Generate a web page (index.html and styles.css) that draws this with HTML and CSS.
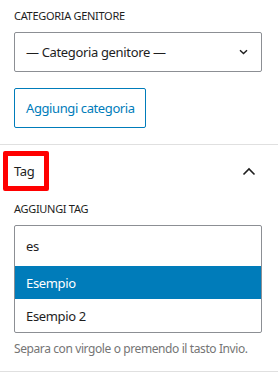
FILE: index.html
```html
<!DOCTYPE html>
<html lang="it">
<head>
<meta charset="utf-8">
<link rel="stylesheet" href="styles.css">
</head>
<body>
<div class="section top">
  <div class="label">Categoria genitore</div>
  <div class="select">
    <span>— Categoria genitore —</span>
    <svg class="chev-down" width="9" height="6" viewBox="0 0 9 6"><path d="M1 1.2l3.5 3.4 3.5-3.4" fill="none" stroke="#1e1e1e" stroke-width="1.4"/></svg>
  </div>
  <button class="btn">Aggiungi categoria</button>
</div>
<div class="panel">
  <div class="panel-head">
    <span class="title">Tag</span>
    <svg class="chev-up" width="14" height="9" viewBox="0 0 14 9"><path d="M1.5 7.5l5.5-5.5 5.5 5.5" fill="none" stroke="#1e1e1e" stroke-width="1.6"/></svg>
  </div>
  <div class="panel-body">
    <div class="label">Aggiungi tag</div>
    <div class="combo">
      <div class="input">es</div>
      <div class="opt selected">Esempio</div>
      <div class="opt">Esempio 2</div>
    </div>
    <p class="help">Separa con virgole o premendo il tasto Invio.</p>
  </div>
</div>
</body>
</html>
```
FILE: styles.css
```css
* { box-sizing: border-box; }
body {
  margin: 0;
  background: #fff;
  font-family: "Noto Sans", "Open Sans", sans-serif;
  color: #1e1e1e;
  font-size: 13px;
  letter-spacing: -0.35px;
  width: 278px;
}
.section.top { padding: 8px 16px 16px 14px; }
.label {
  font-size: 11px;
  text-transform: uppercase;
  line-height: 16px;
  margin-bottom: 8px;
  letter-spacing: -0.3px;
}
.select {
  height: 40px;
  border: 1px solid #8c8f94;
  border-radius: 2px;
  display: flex;
  align-items: center;
  justify-content: space-between;
  padding: 0 13px 0 11px;
}
.btn {
  margin-top: 16px;
  height: 40px;
  padding: 0 10px 0 11px;
  border: 1px solid #007cba;
  border-radius: 2px;
  background: #fff;
  color: #007cba;
  font-family: inherit;
  font-size: 13px;
  letter-spacing: -0.4px;
  display: block;
}
.panel {
  border-top: 1px solid #e0e0e0;
  border-bottom: 1px solid #e0e0e0;
}
.panel-head {
  height: 52px;
  display: flex;
  align-items: center;
  justify-content: space-between;
  padding: 0 22px 0 3px;
}
.title {
  border: 5px solid #f00;
  border-radius: 2px;
  padding: 0 10px 0 6px;
  height: 40px;
  display: flex;
  align-items: center;
  font-size: 13px;
}
.panel-body { padding: 4px 16px 14px 14px; }
.combo {
  border: 1px solid #8c8f94;
  border-radius: 2px;
}
.input { height: 40px; padding: 0 11px; display: flex; align-items: center; }
.opt { height: 33px; padding: 0 11px; display: flex; align-items: center; }
.opt.selected { background: #007cba; color: #fff; }
.help {
  margin: 8px 0 0;
  font-size: 12px;
  color: #757575;
  line-height: 16px;
  letter-spacing: -0.4px;
}
```
